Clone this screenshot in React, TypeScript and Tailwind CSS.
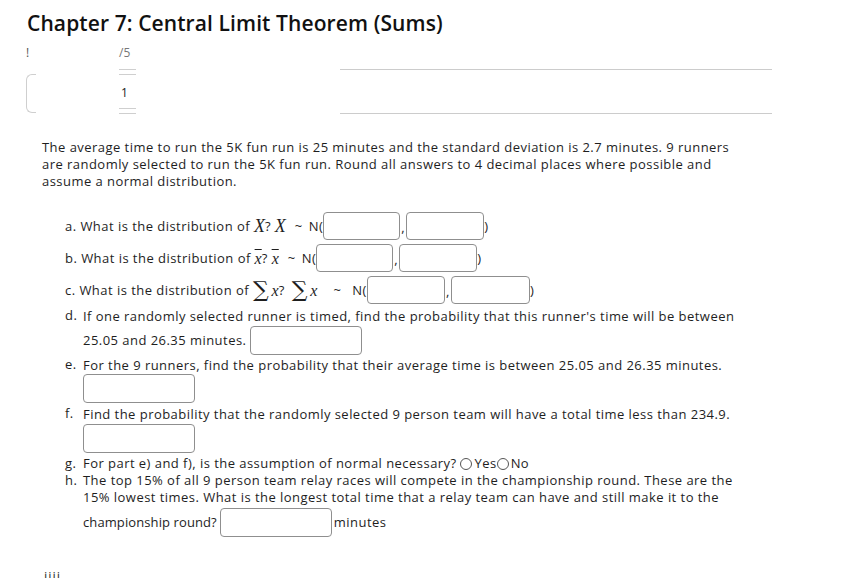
import React from "react";

const Box = ({ w, h = 28 }: { w: number; h?: number }) => (
  <span
    className="inline-block shrink-0 rounded-[4px] border border-[#8f8f8f] bg-white align-middle"
    style={{ width: w, height: h }}
  />
);

const Radio = () => (
  <span className="inline-block h-[12px] w-[12px] shrink-0 rounded-full border border-[#555] bg-white" />
);

const serif = { fontFamily: "'Liberation Serif', serif", letterSpacing: 0 };
const sigma = { fontFamily: "'DejaVu Serif', serif", letterSpacing: 0 };

export default function App() {
  return (
    <div
      className="relative h-[578px] w-[849px] overflow-hidden bg-white text-[#1e1e1e]"
      style={{ fontFamily: "'Open Sans', 'Noto Sans', sans-serif" }}
    >
      {/* Title */}
      <div className="pl-[27px] pt-[9px]">
        <h1 className="text-[21px] font-semibold leading-[28px] tracking-[0.1px] text-[#111]">
          Chapter 7: Central Limit Theorem (Sums)
        </h1>
      </div>

      {/* Header strip */}
      <div className="mt-[8px] flex h-[80px]">
        <div className="ml-[26px] flex w-[12px] flex-col">
          <span className="h-[16px] text-[12px] leading-[16px] text-[#555]">!</span>
          <span className="mt-[13px] h-[39px] w-[10px] rounded-l-[6px] border-y border-l border-[#cfcfcf]" />
        </div>
        <div className="ml-[81px] flex w-[20px] flex-col">
          <span className="h-[16px] text-[12px] leading-[16px] text-[#777]">/5</span>
          <span className="mt-[8px] h-px w-[17px] bg-[#cfcfcf]" />
          <span className="mt-[4px] h-px w-[17px] bg-[#cfcfcf]" />
          <span className="mt-[11px] pl-[2px] text-[12px] leading-[14px] text-[#222]">1</span>
          <span className="mt-[8px] h-px w-[17px] bg-[#cfcfcf]" />
          <span className="mt-[4px] h-px w-[17px] bg-[#cfcfcf]" />
        </div>
        <div className="ml-[201px] flex w-[432px] flex-col">
          <span className="mt-[24px] h-px bg-[#cccccc]" />
          <span className="mt-[43px] h-px bg-[#cccccc]" />
        </div>
      </div>

      {/* Problem statement */}
      <p className="ml-[42px] mt-[14px] w-[780px] whitespace-nowrap text-[13px] leading-[17px] tracking-[0.46px]">
        The average time to run the 5K fun run is 25 minutes and the standard deviation is 2.7 minutes. 9 runners
        <br />
        are randomly selected to run the 5K fun run. Round all answers to 4 decimal places where possible and
        <br />
        assume a normal distribution.
      </p>

      {/* Questions */}
      <div className="ml-[65px] mt-[20px] text-[13px] leading-[17px] tracking-[0.46px]">
        <div className="flex h-[32px] items-center">
          <span>a. What is the distribution of&nbsp;</span>
          <span className="text-[18px] italic" style={serif}>X</span>
          <span>?&nbsp;</span>
          <span className="text-[18px] italic" style={serif}>X</span>
          <span className="ml-[9px]">~</span>
          <span className="ml-[6px]">N(</span>
          <Box w={77} />
          <span className="w-[6px] self-end pb-[6px] text-center">,</span>
          <Box w={78} />
          <span>)</span>
        </div>
        <div className="flex h-[32px] items-center">
          <span>b. What is the distribution of&nbsp;</span>
          <span className="text-[16px] italic overline" style={serif}>x</span>
          <span>?&nbsp;</span>
          <span className="text-[16px] italic overline" style={serif}>x</span>
          <span className="ml-[9px]">~</span>
          <span className="ml-[6px]">N(</span>
          <Box w={77} />
          <span className="w-[6px] self-end pb-[6px] text-center">,</span>
          <Box w={78} />
          <span>)</span>
        </div>
        <div className="flex h-[32px] items-center">
          <span>c. What is the distribution of&nbsp;</span>
          <span className="text-[22px] leading-[20px]" style={sigma}>∑</span>
          <span className="ml-[3px] text-[16px] italic" style={serif}>x</span>
          <span>?&nbsp;</span>
          <span className="ml-[3px] text-[22px] leading-[20px]" style={sigma}>∑</span>
          <span className="ml-[3px] text-[16px] italic" style={serif}>x</span>
          <span className="ml-[16px]">~</span>
          <span className="ml-[11px]">N(</span>
          <Box w={78} />
          <span className="w-[6px] self-end pb-[6px] text-center">,</span>
          <Box w={79} />
          <span>)</span>
        </div>

        {/* d */}
        <div className="mt-[1px] flex">
          <span className="w-[18px] shrink-0">d.</span>
          <div className="flex flex-col">
            <span className="h-[18px] whitespace-nowrap leading-[18px]">
              If one randomly selected runner is timed, find the probability that this runner's time will be between
            </span>
            <div className="flex h-[30px] items-center">
              <span>25.05 and 26.35 minutes.&nbsp;</span>
              <Box w={112} h={29} />
            </div>
          </div>
        </div>

        {/* e */}
        <div className="mt-[1px] flex">
          <span className="w-[18px] shrink-0">e.</span>
          <div className="flex flex-col">
            <span className="h-[18px] whitespace-nowrap leading-[18px]">
              For the 9 runners, find the probability that their average time is between 25.05 and 26.35 minutes.
            </span>
            <div className="flex h-[30px] items-start">
              <Box w={112} h={29} />
            </div>
          </div>
        </div>

        {/* f */}
        <div className="mt-[1px] flex">
          <span className="w-[18px] shrink-0">f.</span>
          <div className="flex flex-col">
            <span className="h-[18px] whitespace-nowrap leading-[18px]">
              Find the probability that the randomly selected 9 person team will have a total time less than 234.9.
            </span>
            <div className="mt-px flex h-[30px] items-start">
              <Box w={112} h={29} />
            </div>
          </div>
        </div>

        {/* g */}
        <div className="mt-[1px] flex h-[17px] items-center">
          <span className="w-[18px] shrink-0">g.</span>
          <span>For part e) and f), is the assumption of normal necessary?&nbsp;</span>
          <Radio />
          <span className="ml-[2px]">Yes</span>
          <Radio />
          <span className="ml-[2px]">No</span>
        </div>

        {/* h */}
        <div className="flex">
          <span className="w-[18px] shrink-0">h.</span>
          <div className="flex flex-col">
            <span className="whitespace-nowrap">
              The top 15% of all 9 person team relay races will compete in the championship round. These are the
              <br />
              15% lowest times. What is the longest total time that a relay team can have and still make it to the
            </span>
            <div className="mt-px flex h-[30px] items-center">
              <span className="tracking-[0.1px]">championship round?</span>
              <span className="ml-[3px]" />
              <Box w={112} h={29} />
              <span className="ml-[2px]">minutes</span>
            </div>
          </div>
        </div>
      </div>

      <div className="ml-[44px] mt-[31px] text-[13px] leading-[17px] tracking-[1px] text-[#333]">iiii&nbsp;&nbsp;.</div>
    </div>
  );
}
